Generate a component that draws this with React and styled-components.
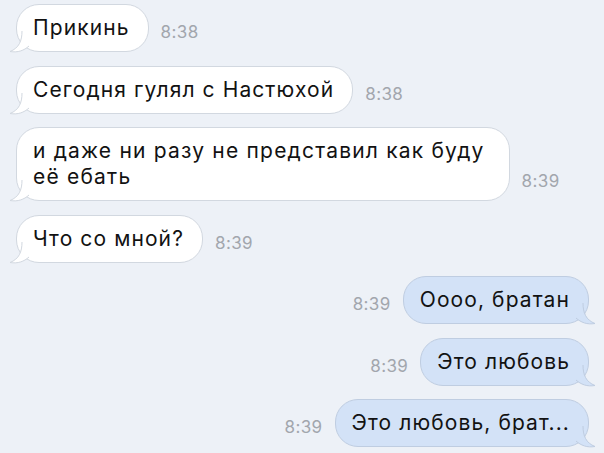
import React from "react";
import styled, { createGlobalStyle } from "styled-components";

const messages = [
    { id: 1, out: false, text: "Прикинь", time: "8:38" },
    { id: 2, out: false, text: "Сегодня гулял с Настюхой", time: "8:38" },
    { id: 3, out: false, text: "и даже ни разу не представил как буду\nеё ебать", time: "8:39", wide: true },
    { id: 4, out: false, text: "Что со мной?", time: "8:39" },
    { id: 5, out: true, text: "Оооо, братан", time: "8:39" },
    { id: 6, out: true, text: "Это любовь", time: "8:39" },
    { id: 7, out: true, text: "Это любовь, брат...", time: "8:39" },
];

// little curled tail at the bottom corner of each bubble
const Tail = ({ out }) => (
    <TailSvg out={out} width="20" height="22" viewBox="0 0 20 22">
        {out ? (
            <>
                <path d="M7 0 C7 10 10 17 19 20.5 C11 21.8 5 19.5 0 15 L0 0 Z" fill="#d3e2f7" />
                <path d="M7 0 C7 10 10 17 19 20.5 C11 21.8 5 19.5 0 15" fill="none" stroke="#bfcde1" strokeWidth="1" />
            </>
        ) : (
            <>
                <path d="M13 0 C13 10 10 17 1 20.5 C9 21.8 15 19.5 20 15 L20 0 Z" fill="#ffffff" />
                <path d="M13 0 C13 10 10 17 1 20.5 C9 21.8 15 19.5 20 15" fill="none" stroke="#d2d8e0" strokeWidth="1" />
            </>
        )}
    </TailSvg>
);

const App = () => {
    return (
        <>
            <GlobalStyle />
            <Chat>
                {messages.map((m) => (
                    <Row key={m.id} out={m.out}>
                        <Bubble out={m.out} wide={m.wide}>
                            {m.text}
                            <Tail out={m.out} />
                        </Bubble>
                        <Time>{m.time}</Time>
                    </Row>
                ))}
            </Chat>
        </>
    );
};

export default App;

const GlobalStyle = createGlobalStyle`
    html, body {
        margin: 0;
        padding: 0;
        background: #edf1f7;
    }
    body {
        font-family: Inter, "Liberation Sans", sans-serif;
        -webkit-font-smoothing: antialiased;
    }
`;

const Chat = styled.div`
    width: 604px;
    height: 453px;
    box-sizing: border-box;
    padding: 4px 15px 0 16px;
    display: flex;
    flex-direction: column;
    gap: 13.5px;
    overflow: hidden;
`;

const Row = styled.div`
    display: flex;
    align-items: flex-end;
    flex-direction: ${(p) => (p.out ? "row-reverse" : "row")};
    gap: 12px;
`;

const Bubble = styled.div`
    position: relative;
    white-space: pre-line;
    font-size: 21px;
    line-height: 26px;
    letter-spacing: ${(p) => (p.wide ? "1.2px" : "1.1px")};
    color: #121212;
    padding: 10px ${(p) => (p.wide ? "24px" : "18px")} 10px 16px;
    border-radius: 23px;
    background: ${(p) => (p.out ? "#d3e2f7" : "#ffffff")};
    border: 1px solid ${(p) => (p.out ? "#bfcde1" : "#d2d8e0")};
`;

const TailSvg = styled.svg`
    position: absolute;
    bottom: -2px;
    ${(p) => (p.out ? "right: -8px;" : "left: -8px;")}
    overflow: visible;
`;

const Time = styled.div`
    font-size: 17px;
    line-height: 17px;
    color: #a2a6ad;
    margin-bottom: 11px;
    letter-spacing: 0.4px;
`;
